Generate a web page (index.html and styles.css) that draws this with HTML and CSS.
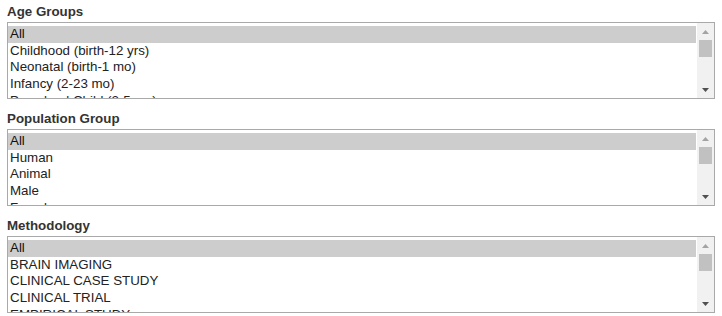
FILE: index.html
```html
<!DOCTYPE html>
<html lang="en">
<head>
    <meta charset="UTF-8">
    <meta name="viewport" content="width=device-width, initial-scale=1.0">
    <link rel="stylesheet" href="styles.css">
    <title>Filtros</title>
</head>
<body>
    <main class="filters">
        <section class="filter">
            <label class="filter-label">Age Groups</label>
            <div class="listbox">
                <div class="options">
                    <div class="option selected">All</div>
                    <div class="option">Childhood (birth-12 yrs)</div>
                    <div class="option">Neonatal (birth-1 mo)</div>
                    <div class="option">Infancy (2-23 mo)</div>
                    <div class="option">Preschool Child (2-5 yrs)</div>
                </div>
                <div class="scrollbar">
                    <div class="scroll-btn">
                        <svg width="7" height="4" viewBox="0 0 7 4"><polygon points="3.5,0 7,4 0,4" fill="#a3a3a3"/></svg>
                    </div>
                    <div class="scroll-track"><div class="scroll-thumb"></div></div>
                    <div class="scroll-btn">
                        <svg width="7" height="4" viewBox="0 0 7 4"><polygon points="0,0 7,0 3.5,4" fill="#505050"/></svg>
                    </div>
                </div>
            </div>
        </section>
        <section class="filter">
            <label class="filter-label">Population Group</label>
            <div class="listbox">
                <div class="options">
                    <div class="option selected">All</div>
                    <div class="option">Human</div>
                    <div class="option">Animal</div>
                    <div class="option">Male</div>
                    <div class="option">Female</div>
                </div>
                <div class="scrollbar">
                    <div class="scroll-btn">
                        <svg width="7" height="4" viewBox="0 0 7 4"><polygon points="3.5,0 7,4 0,4" fill="#a3a3a3"/></svg>
                    </div>
                    <div class="scroll-track"><div class="scroll-thumb"></div></div>
                    <div class="scroll-btn">
                        <svg width="7" height="4" viewBox="0 0 7 4"><polygon points="0,0 7,0 3.5,4" fill="#505050"/></svg>
                    </div>
                </div>
            </div>
        </section>
        <section class="filter">
            <label class="filter-label">Methodology</label>
            <div class="listbox">
                <div class="options">
                    <div class="option selected">All</div>
                    <div class="option">BRAIN IMAGING</div>
                    <div class="option">CLINICAL CASE STUDY</div>
                    <div class="option">CLINICAL TRIAL</div>
                    <div class="option">EMPIRICAL STUDY</div>
                </div>
                <div class="scrollbar">
                    <div class="scroll-btn">
                        <svg width="7" height="4" viewBox="0 0 7 4"><polygon points="3.5,0 7,4 0,4" fill="#a3a3a3"/></svg>
                    </div>
                    <div class="scroll-track"><div class="scroll-thumb"></div></div>
                    <div class="scroll-btn">
                        <svg width="7" height="4" viewBox="0 0 7 4"><polygon points="0,0 7,0 3.5,4" fill="#505050"/></svg>
                    </div>
                </div>
            </div>
        </section>
    </main>
</body>
</html>
```

FILE: styles.css
```css
html{
    box-sizing: border-box;
    font-family: "Liberation Sans", Arial, sans-serif;
    font-size: 13.33px;
}
*,
*:before,
*:after{
    box-sizing: inherit;
}
body{
    margin: 0;
    background-color: #fff;
}
.filters{
    padding: 4px 7px 0;
}
.filter{
    margin-bottom: 12px;
}
.filter-label{
    display: block;
    font-weight: bold;
    line-height: 16px;
    color: #333;
    margin-bottom: 2px;
}
.listbox{
    display: flex;
    height: 77px;
    border: 1px solid #a9a9a9;
    background-color: #fff;
}
.options{
    flex-grow: 1;
    overflow: hidden;
    padding-top: 3px;
    padding-right: 1px;
}
.option{
    height: 16.67px;
    line-height: 16.67px;
    padding: 0 2px;
    color: #222;
    white-space: nowrap;
}
.option.selected{
    background-color: #cdcdcd;
    color: #111;
}
.scrollbar{
    width: 17px;
    display: flex;
    flex-direction: column;
    background-color: #f1f1f1;
}
.scroll-btn{
    height: 17px;
    display: flex;
    justify-content: center;
    align-items: center;
}
.scroll-btn svg{
    display: block;
}
.scroll-track{
    flex-grow: 1;
}
.scroll-thumb{
    height: 17px;
    margin: 0 2px;
    background-color: #c1c1c1;
}
```
